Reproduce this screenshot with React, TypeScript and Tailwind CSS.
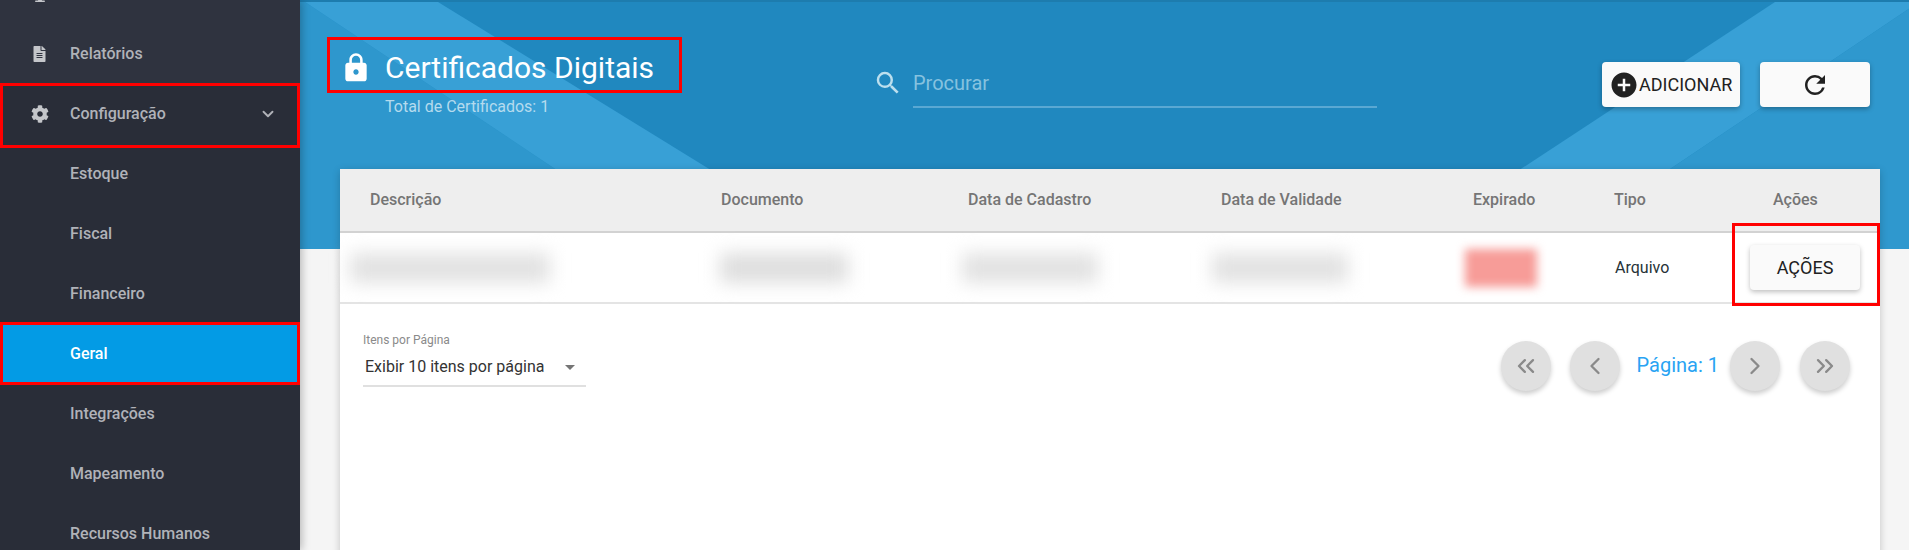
import { ChevronDown, ChevronLeft, ChevronRight, ChevronsLeft, ChevronsRight } from 'lucide-react';
import { FaCog, FaDesktop, FaFileAlt } from 'react-icons/fa';
import { MdAddCircle, MdLock, MdRefresh, MdSearch } from 'react-icons/md';

const subItems = ['Estoque', 'Fiscal', 'Financeiro', 'Geral', 'Integrações', 'Mapeamento', 'Recursos Humanos'];

const columns = ['Descrição', 'Documento', 'Data de Cadastro', 'Data de Validade', 'Expirado', 'Tipo'];

function Sidebar() {
  return (
    <aside className="relative z-10 h-full w-[300px] shrink-0 overflow-hidden bg-[#292d38] text-base font-medium text-[#b0b2b8] shadow-[2px_0_8px_rgba(0,0,0,0.25)]">
      <div className="-mt-[36px] bg-[#2f333f]">
        <div className="flex h-[60px] items-center pl-[31px]">
          <FaDesktop className="size-[18px] text-[#c4c6ca]" />
        </div>
        <div className="flex h-[60px] items-center gap-[24px] pl-[33px]">
          <FaFileAlt className="h-[16px] w-[13px] text-[#c4c6ca]" />
          <span>Relatórios</span>
        </div>
      </div>
      <div className="flex h-[60px] items-center pl-[31px] pr-[23px]">
        <FaCog className="size-[18px] text-[#c4c6ca]" />
        <span className="ml-[21px]">Configuração</span>
        <ChevronDown className="ml-auto size-[18px]" strokeWidth={2.5} />
      </div>
      {subItems.map((item) => (
        <div
          key={item}
          className={
            item === 'Geral'
              ? 'flex h-[60px] items-center bg-[#039be5] pl-[70px] text-white'
              : 'flex h-[60px] items-center pl-[70px]'
          }
        >
          {item}
        </div>
      ))}
    </aside>
  );
}

function HeaderBands() {
  return (
    <svg className="absolute inset-0 h-full w-full" viewBox="0 0 1609 249" preserveAspectRatio="none">
      <polygon points="0,0 5,0 375,249 0,249" fill="#2e97cd" />
      <polygon points="5,0 138,0 539,249 375,249" fill="#38a0d6" />
      <polygon points="1475,0 1619,0 1251,249 1099,249" fill="#38a0d6" />
      <polygon points="1619,0 1609,0 1609,249 1251,249" fill="#2f98ce" />
    </svg>
  );
}

function PageButton({ children }: { children: React.ReactNode }) {
  return (
    <button className="flex size-[50px] items-center justify-center rounded-full bg-[#e0e0e0] text-[#8a8a8a] shadow-[0_3px_5px_rgba(0,0,0,0.2)]">
      {children}
    </button>
  );
}

function CertificatesTable() {
  return (
    <section className="relative z-10 mr-[29px] -mt-[80px] ml-[40px] h-[400px] bg-white shadow-[0_2px_8px_rgba(0,0,0,0.2)]">
      <div className="grid h-[64px] grid-cols-[351px_247px_253px_252px_141px_136px_1fr] items-center border-b-2 border-[#d2d2d2] bg-[#eeeeee] pl-[30px] text-base font-medium text-[#757575]">
        {columns.map((col) => (
          <span key={col}>{col}</span>
        ))}
        <span className="pl-[23px]">Ações</span>
      </div>
      <div className="relative flex h-[71px] items-center border-b-2 border-[#e4e4e4] text-base text-[#263238]">
        {/* dados sensíveis ficam borrados na linha */}
        <div className="ml-[10px] h-[30px] w-[200px] bg-[#e2e2e2] blur-[9px]" />
        <div className="ml-[170px] h-[30px] w-[128px] bg-[#dedede] blur-[9px]" />
        <div className="ml-[114px] h-[30px] w-[136px] bg-[#e2e2e2] blur-[9px]" />
        <div className="ml-[114px] h-[30px] w-[136px] bg-[#e2e2e2] blur-[9px]" />
        <div className="ml-[117px] h-[38px] w-[72px] bg-[#f79c98] blur-[5px]" />
        <span className="ml-[78px] w-[135px]">Arquivo</span>
        <button className="h-[45px] w-[110px] rounded bg-[#fafafa] text-lg text-[#212121] shadow-[0_2px_5px_rgba(0,0,0,0.25)]">
          AÇÕES
        </button>
      </div>
      <div className="flex items-start justify-between pt-[29px] pr-[30px] pl-[23px]">
        <div className="w-[223px] border-b-2 border-[#e0e0e0] pb-[6px]">
          <div className="text-xs leading-[14px] text-[#8a8a8a]">Itens por Página</div>
          <div className="mt-[8px] flex items-center pl-[2px] text-base leading-6 text-[#333333]">
            <span>Exibir 10 itens por página</span>
            <span className="ml-[21px] border-x-[5px] border-t-[5px] border-x-transparent border-t-[#757575]" />
          </div>
        </div>
        <div className="mt-[8px] flex items-center">
          <PageButton>
            <ChevronsLeft className="size-[28px]" strokeWidth={2} />
          </PageButton>
          <span className="ml-[19px]">
            <PageButton>
              <ChevronLeft className="size-[28px]" strokeWidth={2} />
            </PageButton>
          </span>
          <span className="mr-[11px] ml-[17px] -mt-[3px] text-xl text-[#29a3f3]">Página: 1</span>
          <PageButton>
            <ChevronRight className="size-[28px]" strokeWidth={2} />
          </PageButton>
          <span className="ml-[20px]">
            <PageButton>
              <ChevronsRight className="size-[28px]" strokeWidth={2} />
            </PageButton>
          </span>
        </div>
      </div>
    </section>
  );
}

export default function App() {
  return (
    <div className="relative flex h-screen overflow-hidden bg-[#f5f5f5] font-['Roboto',sans-serif]">
      <Sidebar />
      <main className="min-w-0 flex-1">
        <header className="relative flex h-[249px] items-start border-t-2 border-[#1d7cae] bg-[#2088bf]">
          <HeaderBands />
          <div className="relative mt-[50px] ml-[45px] w-[532px]">
            <div className="flex items-center">
              <MdLock className="-ml-[5px] size-[32px] text-white" />
              <h1 className="ml-[13px] text-[30px] leading-[30px] font-normal text-white">Certificados Digitais</h1>
            </div>
            <p className="mt-[13px] ml-[40px] text-base leading-5 text-[#b5dbee]">Total de Certificados: 1</p>
          </div>
          <div className="relative mt-[66px] flex w-[500px] items-start">
            <MdSearch className="-ml-[4px] size-[30px] shrink-0 text-[#bcdfee]" />
            <input
              placeholder="Procurar"
              className="ml-[10px] h-[40px] flex-1 border-b-2 border-[#5aa8d3] bg-transparent pb-[9px] pl-0 text-xl outline-none placeholder:text-[#86c2df]"
            />
          </div>
          <div className="relative mt-[60px] mr-[39px] ml-auto flex gap-[20px]">
            <button className="flex h-[45px] w-[138px] items-center rounded bg-[#fafafa] pl-[7px] text-lg text-[#212121] shadow-[0_2px_5px_rgba(0,0,0,0.3)]">
              <MdAddCircle className="size-[30px] shrink-0" />
              <span>ADICIONAR</span>
            </button>
            <button className="flex h-[45px] w-[110px] items-center justify-center rounded bg-[#fafafa] text-[#212121] shadow-[0_2px_5px_rgba(0,0,0,0.3)]">
              <MdRefresh className="size-[30px]" />
            </button>
          </div>
        </header>
        <CertificatesTable />
      </main>

      {/* marcações vermelhas sobre a tela */}
      <div className="absolute top-[83px] left-0 z-20 h-[65px] w-[300px] border-[3px] border-[#ff0000]" />
      <div className="absolute top-[322px] left-0 z-20 h-[63px] w-[300px] border-[3px] border-[#ff0000]" />
      <div className="absolute top-[37px] left-[327px] z-20 h-[56px] w-[355px] border-[3px] border-[#ff0000]" />
      <div className="absolute top-[223px] left-[1732px] z-20 h-[83px] w-[148px] border-[3px] border-[#ff0000]" />
    </div>
  );
}
